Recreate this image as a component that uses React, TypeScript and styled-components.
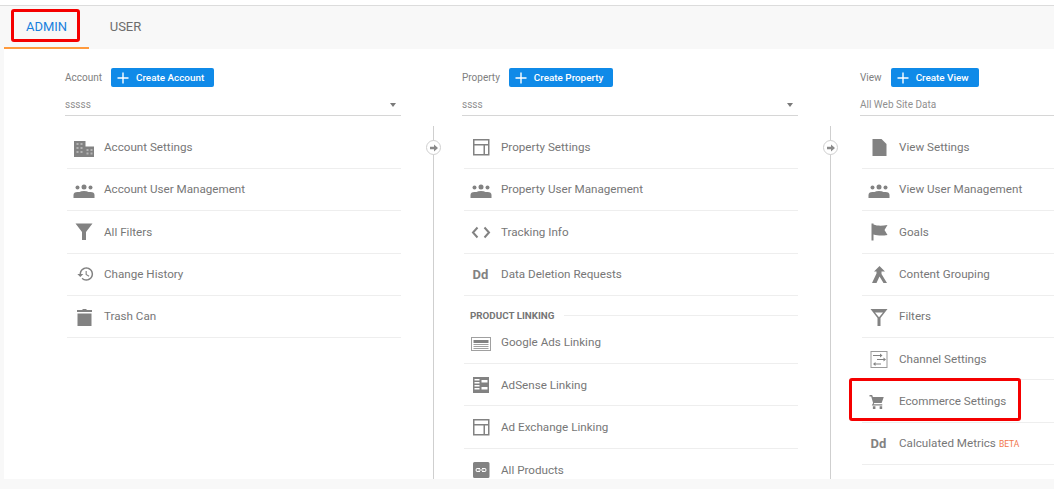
import React from "react";
import styled, { createGlobalStyle } from "styled-components";

const GlobalStyle = createGlobalStyle`
  html, body {
    margin: 0;
    padding: 0;
    background: #fff;
    overflow: hidden;
  }
  * {
    box-sizing: border-box;
  }
`;

const GREY = "#828282";

type IconName =
  | "building"
  | "users"
  | "filter"
  | "funnel"
  | "history"
  | "trash"
  | "layout"
  | "code"
  | "dd"
  | "ads"
  | "adsense"
  | "link"
  | "doc"
  | "flag"
  | "merge"
  | "channel"
  | "cart";

function Icon({ name }: { name: IconName }) {
  if (name === "dd") return <DdMark>Dd</DdMark>;
  return (
    <svg width="24" height="24" viewBox="0 0 24 24" fill={GREY}>
      {name === "building" && (
        <>
          <path d="M2 6h11.500v5.500H22V22H2z" />
          <path
            fill="#b4b4b4"
            d="M4.500 8h2v2h-2zm4 0h2v2h-2zm-4 4h2v2h-2zm4 0h2v2h-2zm-4 4h2v2h-2zm4 0h2v2h-2zm6-2h2v2h-2zm4 0h2v2h-2zm-4 3.500h2v2h-2zm4 0h2v2h-2z"
          />
        </>
      )}
      {name === "users" && (
        <>
          <circle cx="5.500" cy="9.500" r="2" />
          <circle cx="12" cy="9" r="2.500" />
          <circle cx="18.500" cy="9.500" r="2" />
          <path d="M1.500 20v-3q0-3 4-3h2q1.500-1 4.500-1t4.500 1h2q4 0 4 3v3z" />
        </>
      )}
      {name === "filter" && <path d="M3.500 3.500h17l-6.500 8.500v8h-4v-8z" />}
      {name === "funnel" && (
        <path
          fillRule="evenodd"
          d="M3.500 4h17l-7 9v8h-3v-8zM8 7.500h8l-4 4.800z"
        />
      )}
      {name === "history" && (
        <g transform="translate(4.600 3) scale(.75)">
          <path d="M13 3c-4.970 0-9 4.030-9 9H1l3.890 3.890.070.140L9 12H6c0-3.870 3.130-7 7-7s7 3.130 7 7-3.130 7-7 7c-1.930 0-3.680-.790-4.940-2.060l-1.420 1.420C8.270 19.990 10.510 21 13 21c4.970 0 9-4.030 9-9s-4.030-9-9-9zm-1 5v5l4.280 2.540.720-1.210-3.500-2.080V8H12z" />
        </g>
      )}
      {name === "trash" && (
        <path d="M5.500 8.500h14V21h-14zM5 5h5l1-1h3l1 1h5v2H5z" />
      )}
      {name === "layout" && (
        <path
          fillRule="evenodd"
          d="M4 4h16.500v16.500H4zm1.500 1.500v3.500h13.500V5.500zm0 5v8.500h9v-8.500zm10.500 0v8.500h3v-8.500z"
        />
      )}
      {name === "code" && (
        <g fill="none" stroke={GREY} strokeWidth="2">
          <path d="M8.500 7.500l-4.500 5 4.500 5" />
          <path d="M15.500 7.500l4.500 5-4.500 5" />
        </g>
      )}
      {name === "ads" && (
        <g>
          <path
            fill="#a0a0a0"
            fillRule="evenodd"
            d="M2 6h20v14H2zm1 1v12h18V7z"
          />
          <path d="M4.500 9h15v3h-15z" />
          <path fill="#a0a0a0" d="M4.500 13h15v1h-15zm0 2h15v1h-15zm0 2h15v1h-15z" />
        </g>
      )}
      {name === "adsense" && (
        <path
          fillRule="evenodd"
          d="M4 4h16v16H4zm1.500 2v1.500h5V6zm0 3v1.500h5V9zm0 3v1.500h5V12zm0 3v1.500h5V15zm7-8v2.500h6V7zm0 7v2.500h6V14z"
        />
      )}
      {name === "link" && (
        <path
          fillRule="evenodd"
          d="M5.500 4h13.500q1.500 0 1.500 1.500v13q0 1.500-1.500 1.500H5.500Q4 20 4 18.500v-13Q4 4 5.500 4zM8.500 10a2 2 0 0 0 0 4H11v-1H8.500a1 1 0 0 1 0-2H11v-1zM13 10v1h2.500a1 1 0 0 1 0 2H13v1h2.500a2 2 0 0 0 0-4zm-3.500 1.500v1h5v-1z"
        />
      )}
      {name === "doc" && <path d="M5.500 4h9l5 5v12h-14z" />}
      {name === "flag" && (
        <path d="M4.500 3.500h2v1c4 1.500 8 1.500 14 .5l-3 5 3 5c-6 1-10 .5-14-.5v6h-2z" />
      )}
      {name === "merge" && (
        <path d="M12.500 4l5.500 5.500h-3.500v2.500l5.500 9h-3.500l-4-6.500-3 6.500H5l4.500-9.500V9.500H7z" />
      )}
      {name === "channel" && (
        <>
          <path
            fill="#9a9a9a"
            fillRule="evenodd"
            d="M3.500 4h17v17h-17zm1 1v15h15V5z"
          />
          <path d="M6 8h7V6.500l2.500 2-2.500 2V9H6zm4 4h6.500v-1.500l2.500 2-2.500 2V13H10zm-1.500 3v1.500H14v1H8.500V19L6 17z" />
        </>
      )}
      {name === "cart" && (
        <g transform="translate(1 3.750) scale(.75)">
          <path d="M2 3h3.500l1 2.500H21l-2.800 8H8.300l-.8 1.800H19V17H5l1.800-3.500L4.300 5H2zM6.500 18h3.400v3.600H6.500zm9 0h3.400v3.600h-3.400z" />
        </g>
      )}
    </svg>
  );
}

function MenuRow({
  icon,
  label,
  beta,
  marked,
  bare,
}: {
  icon: IconName;
  label: string;
  beta?: boolean;
  marked?: boolean;
  bare?: boolean;
}) {
  return (
    <Row $bare={bare}>
      <IconSlot>
        <Icon name={icon} />
      </IconSlot>
      <RowLabel>
        {label}
        {beta && <Beta>BETA</Beta>}
      </RowLabel>
      {marked && <RowMark />}
    </Row>
  );
}

function ColumnHead({ label, action, value }: { label: string; action: string; value: string }) {
  return (
    <>
      <HeadLine>
        <HeadLabel>{label}</HeadLabel>
        <CreateButton>
          <svg width="12" height="12" viewBox="0 0 12 12" fill="#fff">
            <path d="M5.300.5h1.400v4.800h4.800v1.400H6.700v4.800H5.300V6.700H.5V5.300h4.800z" />
          </svg>
          {action}
        </CreateButton>
      </HeadLine>
      <Picker>
        <span>{value}</span>
        <Caret />
      </Picker>
    </>
  );
}

function Connector() {
  return (
    <Rail>
      <RailDot>
        <svg width="10" height="10" viewBox="0 0 10 10" fill="#8a8a8a">
          <path d="M1 3.800h4V1.500L9 5 5 8.500V6.200H1z" />
        </svg>
      </RailDot>
    </Rail>
  );
}

export default function App() {
  return (
    <Page>
      <GlobalStyle />
      <Tabs>
        <Tab $active>
          ADMIN
          <TabMark />
        </Tab>
        <Tab>USER</Tab>
      </Tabs>
      <Content>
        <Column>
          <ColumnHead label="Account" action="Create Account" value="sssss" />
          <Rows>
            <MenuRow icon="building" label="Account Settings" />
            <MenuRow icon="users" label="Account User Management" />
            <MenuRow icon="filter" label="All Filters" />
            <MenuRow icon="history" label="Change History" />
            <MenuRow icon="trash" label="Trash Can" />
          </Rows>
        </Column>
        <Connector />
        <Column>
          <ColumnHead label="Property" action="Create Property" value="ssss" />
          <Rows>
            <MenuRow icon="layout" label="Property Settings" />
            <MenuRow icon="users" label="Property User Management" />
            <MenuRow icon="code" label="Tracking Info" />
            <MenuRow icon="dd" label="Data Deletion Requests" />
            <SectionTitle>PRODUCT LINKING</SectionTitle>
            <MenuRow icon="ads" label="Google Ads Linking" />
            <MenuRow icon="adsense" label="AdSense Linking" />
            <MenuRow icon="layout" label="Ad Exchange Linking" />
            <MenuRow icon="link" label="All Products" bare />
          </Rows>
        </Column>
        <Connector />
        <Column $last>
          <ColumnHead label="View" action="Create View" value="All Web Site Data" />
          <Rows>
            <MenuRow icon="doc" label="View Settings" />
            <MenuRow icon="users" label="View User Management" />
            <MenuRow icon="flag" label="Goals" />
            <MenuRow icon="merge" label="Content Grouping" />
            <MenuRow icon="funnel" label="Filters" />
            <MenuRow icon="channel" label="Channel Settings" />
            <MenuRow icon="cart" label="Ecommerce Settings" marked />
            <MenuRow icon="dd" label="Calculated Metrics" beta />
          </Rows>
        </Column>
      </Content>
      <Footer />
    </Page>
  );
}

const Page = styled.div`
  width: 1054px;
  height: 489px;
  overflow: hidden;
  padding-top: 5px;
  background: #fff;
  font-family: Roboto, "Liberation Sans", sans-serif;
`;

const Tabs = styled.div`
  display: flex;
  height: 44px;
  padding-left: 4px;
  background: #f8f8f8;
  border-top: 1px solid #dcdcdc;
`;

const Tab = styled.div<{ $active?: boolean }>`
  position: relative;
  flex: none;
  width: ${(p) => (p.$active ? "85px" : "73px")};
  display: flex;
  align-items: center;
  justify-content: center;
  padding-bottom: 1px;
  font-size: 13px;
  color: ${(p) => (p.$active ? "#1a7fdd" : "#6d6d6d")};
  border-bottom: 2px solid ${(p) => (p.$active ? "#ff9a3d" : "transparent")};
`;

const TabMark = styled.div`
  position: absolute;
  left: 7px;
  top: 3px;
  width: 69px;
  height: 33px;
  border: 3px solid #f50000;
  border-radius: 3px;
`;

const Content = styled.div`
  display: flex;
  height: 430px;
  padding: 19px 0 0 61px;
  border-left: 4px solid #f8f8f8;
`;

const Column = styled.div<{ $last?: boolean }>`
  flex: none;
  width: ${(p) => (p.$last ? "260px" : "336px")};
  margin-left: ${(p) => (p.$last ? "1px" : "0")};
`;

const HeadLine = styled.div`
  display: flex;
  align-items: center;
  height: 19px;
  gap: 9px;
`;

const HeadLabel = styled.span`
  font-size: 10px;
  color: #808080;
`;

const CreateButton = styled.button`
  display: flex;
  align-items: center;
  gap: 7px;
  height: 19px;
  padding: 0 10px 0 6px;
  border: none;
  border-radius: 2px;
  background: #0f8ae8;
  color: #fff;
  font-family: inherit;
  font-size: 9.9px;
  font-weight: 500;
`;

const Picker = styled.div`
  display: flex;
  align-items: center;
  justify-content: space-between;
  height: 22px;
  margin-top: 7px;
  padding-right: 5px;
  border-bottom: 1px solid #d6d6d6;
  font-size: 10px;
  color: #8f8f8f;
`;

const Caret = styled.i`
  width: 0;
  height: 0;
  border-left: 3.5px solid transparent;
  border-right: 3.5px solid transparent;
  border-top: 4px solid #7a7a7a;
`;

const Rows = styled.div`
  margin: 10.7px 0 0 2px;
`;

const Row = styled.div<{ $bare?: boolean }>`
  position: relative;
  display: flex;
  align-items: center;
  height: 42.3px;
  border-bottom: ${(p) => (p.$bare ? "none" : "1px solid #eeeeee")};
`;

const IconSlot = styled.div`
  flex: none;
  width: 36px;
  padding-right: 3px;
  display: flex;
  align-items: center;
  justify-content: center;
`;

const DdMark = styled.span`
  font-size: 13px;
  font-weight: 700;
  color: ${GREY};
`;

const RowLabel = styled.span`
  margin-left: 1px;
  margin-bottom: 0.4px;
  font-size: 11.65px;
  color: #777;
`;

const Beta = styled.span`
  margin-left: 3px;
  font-size: 8.5px;
  color: #f2774a;
`;

const RowMark = styled.div`
  position: absolute;
  left: -13px;
  top: -2px;
  width: 172px;
  height: 43px;
  border: 3px solid #f50000;
  border-radius: 3px;
`;

const SectionTitle = styled.div`
  display: flex;
  align-items: center;
  gap: 10px;
  height: 25px;
  margin: 7.5px 0 -6.5px 6px;
  font-size: 9.8px;
  font-weight: 700;
  color: #757575;

  &::after {
    content: "";
    flex: 1;
    border-top: 1px solid #eeeeee;
  }
`;

const Rail = styled.div`
  position: relative;
  flex: none;
  width: 61px;
  margin-top: 58px;
  display: flex;
  justify-content: center;

  &::before {
    content: "";
    width: 1px;
    height: 100%;
    margin-left: 3px;
    background: #cfcfcf;
  }
`;

const RailDot = styled.div`
  position: absolute;
  left: 25px;
  top: 14px;
  width: 15px;
  height: 15px;
  border: 1px solid #cfcfcf;
  border-radius: 50%;
  background: #fff;
  display: flex;
  align-items: center;
  justify-content: center;
`;

const Footer = styled.div`
  height: 10px;
  background: #f8f8f8;
`;
